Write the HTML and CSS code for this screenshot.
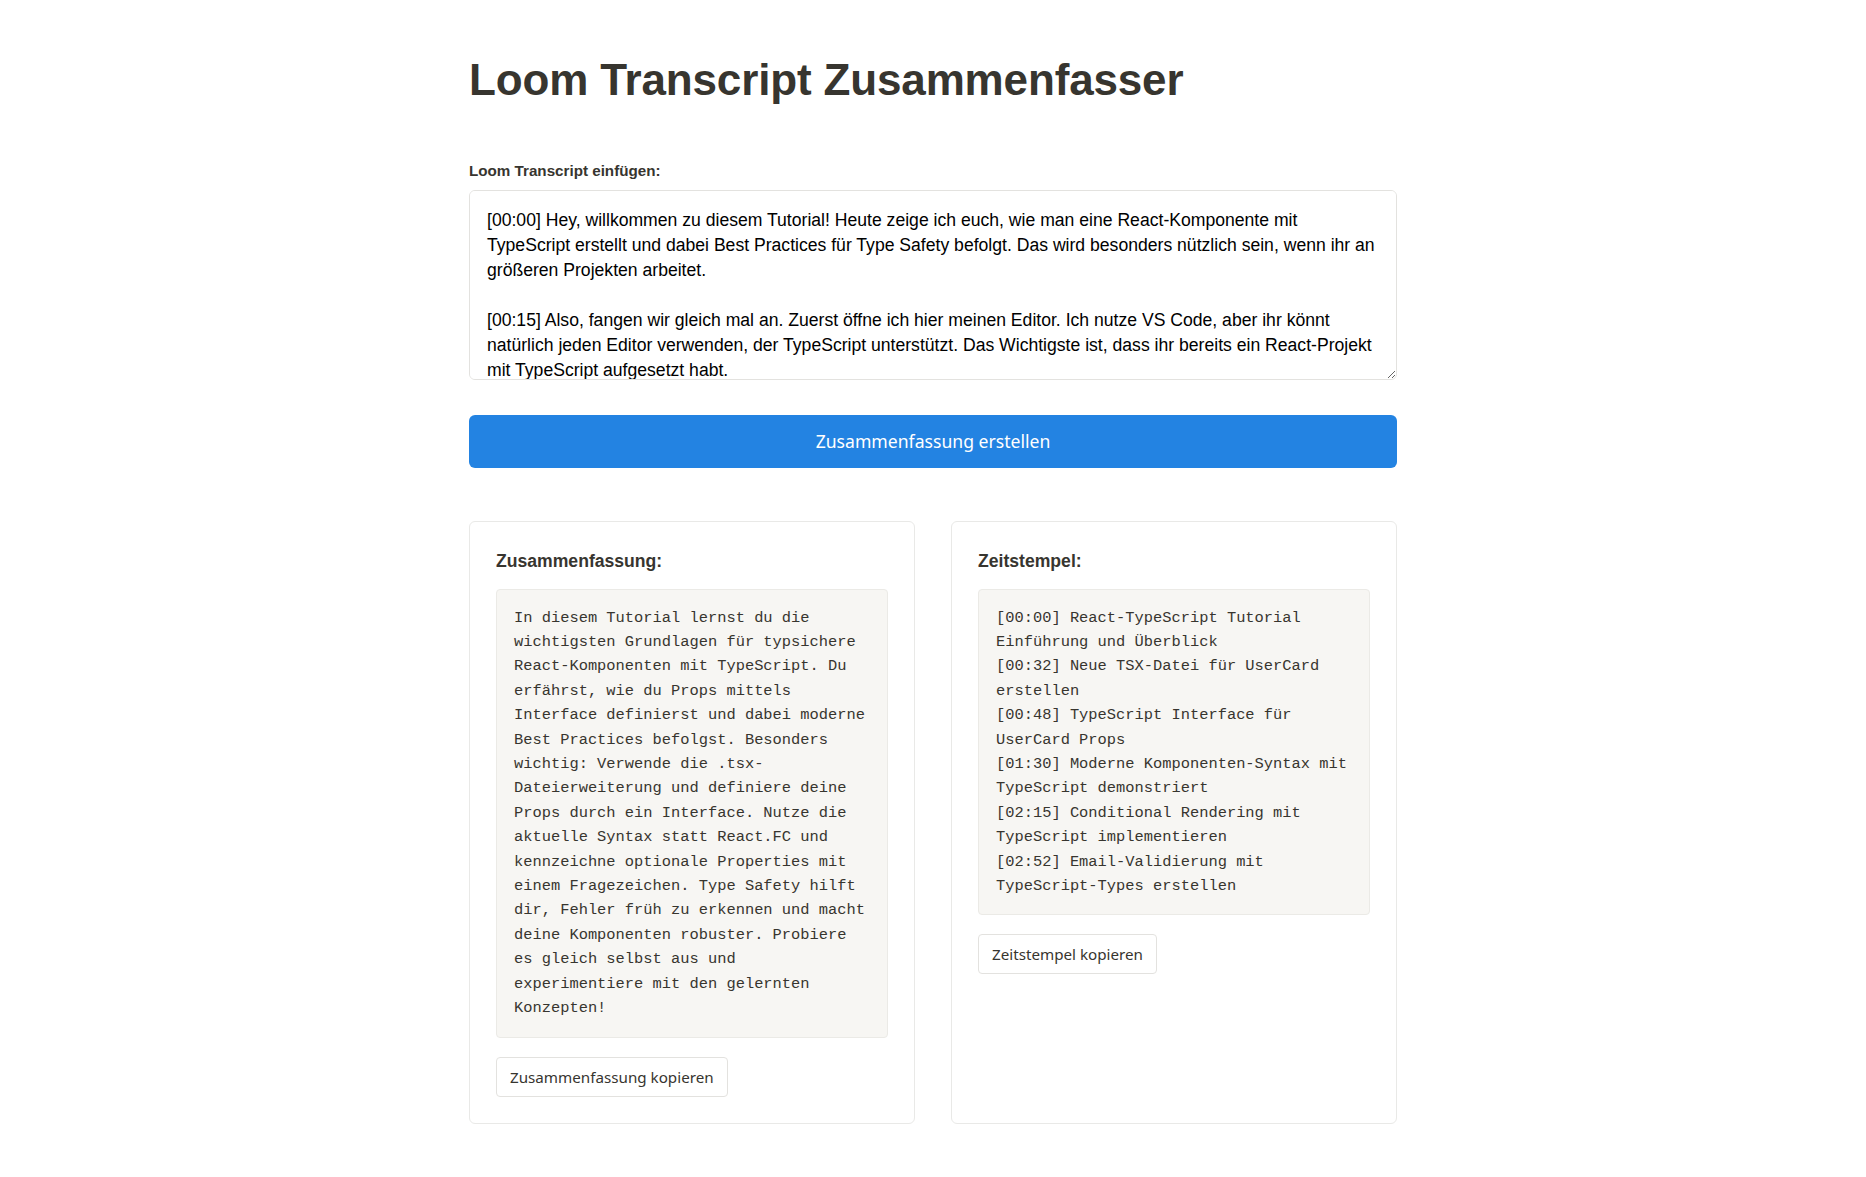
FILE: index.html
```html
<!DOCTYPE html>
<html lang="de">
<head>
<meta charset="utf-8">
<title>Loom Transcript Zusammenfasser</title>
<link rel="stylesheet" href="styles.css">
</head>
<body>
<main class="page">
  <h1 class="title">Loom Transcript Zusammenfasser</h1>
  <label class="label" for="transcript">Loom Transcript einfügen:</label>
  <textarea id="transcript" class="transcript">[00:00] Hey, willkommen zu diesem Tutorial! Heute zeige ich euch, wie man eine React-Komponente mit TypeScript erstellt und dabei Best Practices für Type Safety befolgt. Das wird besonders nützlich sein, wenn ihr an größeren Projekten arbeitet.

[00:15] Also, fangen wir gleich mal an. Zuerst öffne ich hier meinen Editor. Ich nutze VS Code, aber ihr könnt natürlich jeden Editor verwenden, der TypeScript unterstützt. Das Wichtigste ist, dass ihr bereits ein React-Projekt mit TypeScript aufgesetzt habt.

[00:32] Okay, als erstes erstellen wir eine neue Datei. Ich nenne sie UserCard.tsx. Wichtig ist hier die Endung .tsx, damit TypeScript weiß, dass wir JSX verwenden.</textarea>
  <button class="primary">Zusammenfassung erstellen</button>
  <section class="results">
    <div class="card">
      <h3 class="card-title">Zusammenfassung:</h3>
      <pre class="output">In diesem Tutorial lernst du die wichtigsten Grundlagen für typsichere React-Komponenten mit TypeScript. Du erfährst, wie du Props mittels Interface definierst und dabei moderne Best Practices befolgst. Besonders wichtig: Verwende die .tsx-Dateierweiterung und definiere deine Props durch ein Interface. Nutze die aktuelle Syntax statt React.FC und kennzeichne optionale Properties mit einem Fragezeichen. Type Safety hilft dir, Fehler früh zu erkennen und macht deine Komponenten robuster. Probiere es gleich selbst aus und experimentiere mit den gelernten Konzepten!</pre>
      <button class="secondary">Zusammenfassung kopieren</button>
    </div>
    <div class="card">
      <h3 class="card-title">Zeitstempel:</h3>
      <pre class="output">[00:00] React-TypeScript Tutorial Einführung und Überblick
[00:32] Neue TSX-Datei für UserCard erstellen
[00:48] TypeScript Interface für UserCard Props
[01:30] Moderne Komponenten-Syntax mit TypeScript demonstriert
[02:15] Conditional Rendering mit TypeScript implementieren
[02:52] Email-Validierung mit TypeScript-Types erstellen</pre>
      <button class="secondary">Zeitstempel kopieren</button>
    </div>
  </section>
</main>
</body>
</html>
```

FILE: styles.css
```css
* {
  box-sizing: border-box;
}

body {
  margin: 0;
  background: #ffffff;
  color: #37352f;
  font-family: "Liberation Sans", Arial, sans-serif;
}

.page {
  max-width: 960px;
  margin: 0 auto;
  padding: 55px 16px 40px;
  display: flex;
  flex-direction: column;
}

.title {
  margin: 0 0 56px;
  font-size: 44px;
  font-weight: 700;
  letter-spacing: -0.15px;
  line-height: 1.15;
  color: #37352f;
}

.label {
  display: block;
  font-size: 15.2px;
  font-weight: 700;
  color: #37352f;
  margin-bottom: 11px;
}

.transcript {
  display: block;
  width: 100%;
  height: 190px;
  padding: 17px;
  border: 1px solid #e3e2df;
  border-radius: 6px;
  font-family: "Liberation Sans", Arial, sans-serif;
  font-size: 17.6px;
  line-height: 25px;
  color: #000000;
  background: #ffffff;
  resize: vertical;
  margin: 0 0 35px;
}

.primary {
  display: block;
  width: 100%;
  height: 53px;
  border: none;
  border-radius: 6px;
  background: #2383e2;
  color: #ffffff;
  font-family: "Noto Sans", "Open Sans", sans-serif;
  font-size: 17.6px;
  cursor: pointer;
  margin: 0 0 53px;
}

.results {
  display: grid;
  grid-template-columns: 1fr 1fr;
  gap: 36px;
}

.card {
  border: 1px solid #e9e9e7;
  border-radius: 6px;
  padding: 29px 26px 26px;
  display: flex;
  flex-direction: column;
  align-items: flex-start;
}

.card-title {
  margin: 0 0 17px;
  font-size: 17.6px;
  font-weight: 700;
  color: #37352f;
}

.output {
  width: 100%;
  margin: 0;
  padding: 16px 15px 16px 17px;
  background: #f7f6f3;
  border: 1px solid #ebeae6;
  border-radius: 4px;
  font-family: "Liberation Mono", "Courier New", monospace;
  font-size: 15.4px;
  line-height: 24.4px;
  color: #37352f;
  white-space: pre-wrap;
  word-wrap: break-word;
}

.secondary {
  margin-top: 19px;
  height: 40px;
  padding: 0 13px;
  border: 1px solid #e3e2df;
  border-radius: 4px;
  background: #ffffff;
  color: #37352f;
  font-family: "Noto Sans", "Open Sans", sans-serif;
  font-size: 15.2px;
  cursor: pointer;
}
```
